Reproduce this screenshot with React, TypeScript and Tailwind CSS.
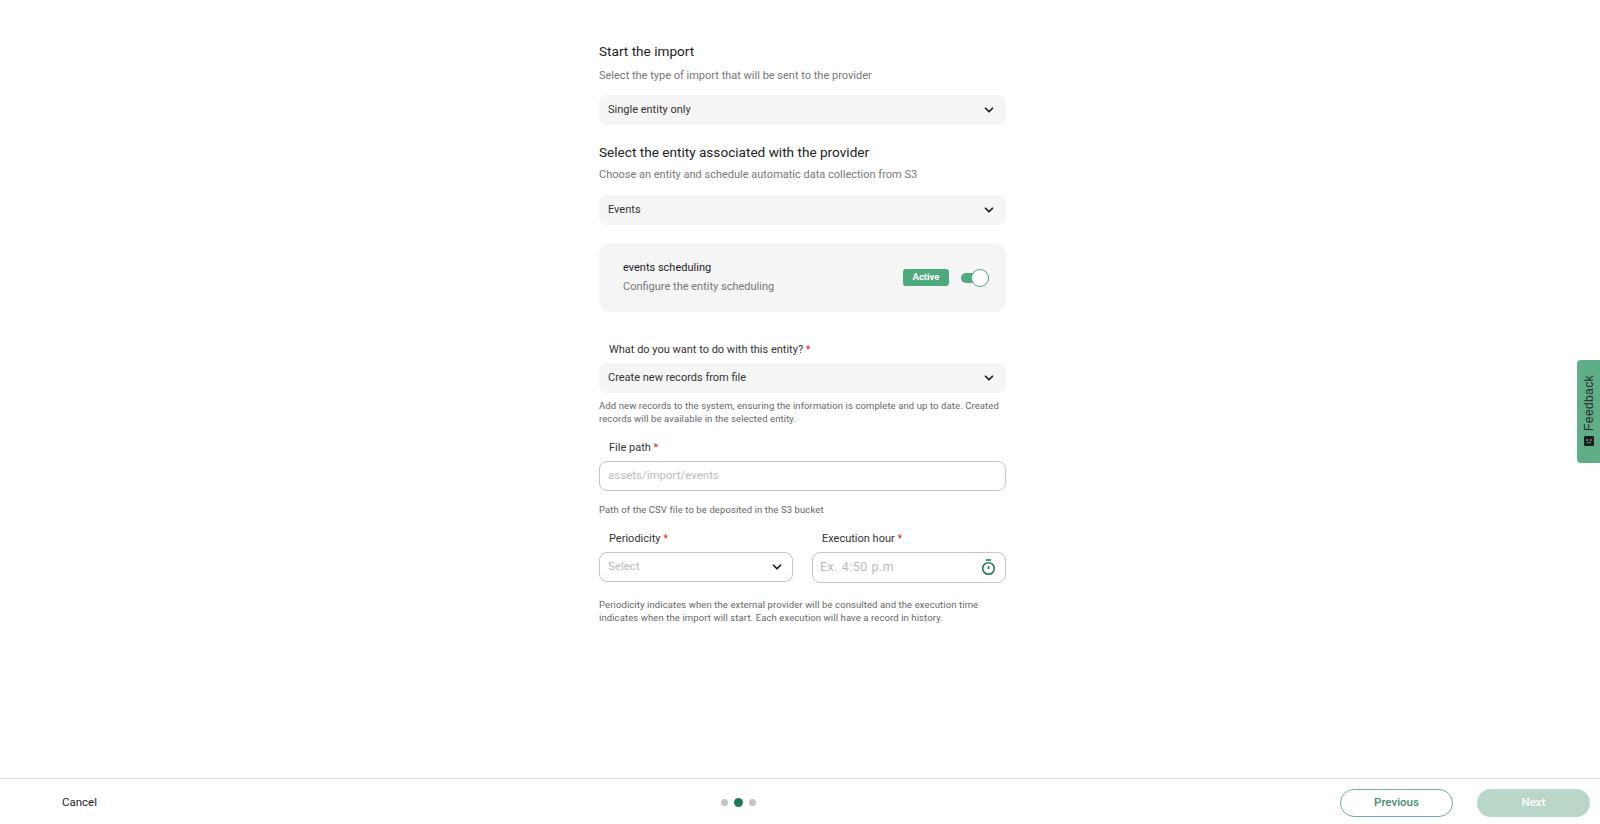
import React from 'react';
import { ChevronDown } from 'lucide-react';

const Chevron = () => <ChevronDown size={14} strokeWidth={3} className="text-[#1c1c1c]" />;

const Label = ({ text, className = '' }: { text: string; className?: string }) => (
  <div className={`h-[16px] px-[10px] text-[11px] leading-[16px] text-[#333] ${className}`}>
    {text} <span className="text-[#d92d20]">*</span>
  </div>
);

const GraySelect = ({ value }: { value: string }) => (
  <div className="flex h-[30px] items-center justify-between rounded-[8px] bg-[#f5f5f5] pl-[9px] pr-[10px] text-[11px] text-[#333]">
    <span>{value}</span>
    <Chevron />
  </div>
);

const Hint = ({ children, className = '' }: { children: React.ReactNode; className?: string }) => (
  <p className={`text-[9.5px] leading-[13px] tracking-[0.1px] text-[#666] ${className}`}>{children}</p>
);

export default function App() {
  return (
    <div className="relative flex h-[824px] flex-col overflow-hidden bg-white font-['Roboto',sans-serif]">
      <main className="flex-1">
        <div className="ml-[599px] w-[407px] pt-[43px]">
          <h2 className="text-[13.6px] font-[450] leading-[17px] text-[#222]">Start the import</h2>
          <p className="mt-[8px] text-[11px] leading-[15px] text-[#777]">Select the type of import that will be sent to the provider</p>
          <div className="mt-[12px]">
            <GraySelect value="Single entity only" />
          </div>

          <h2 className="mt-[19px] text-[13.6px] font-[450] leading-[17px] text-[#222]">Select the entity associated with the provider</h2>
          <p className="mt-[6px] text-[11px] leading-[15px] text-[#777]">Choose an entity and schedule automatic data collection from S3</p>
          <div className="mt-[13px]">
            <GraySelect value="Events" />
          </div>

          <div className="mt-[18px] flex h-[69px] items-center justify-between rounded-[12px] bg-[#f5f5f5] pl-[24px] pr-[17px]">
            <div>
              <div className="text-[11px] leading-[16px] text-[#1c1c1c]">events scheduling</div>
              <div className="mt-[3px] text-[11px] leading-[16px] text-[#777]">Configure the entity scheduling</div>
            </div>
            <div className="flex items-center gap-[12px]">
              <span className="flex h-[17px] w-[46px] items-center justify-center rounded-[3px] bg-[#4fa97e] text-[9.5px] font-bold text-white">Active</span>
              <span className="relative block h-[10px] w-[28px] rounded-full bg-[#4fa97e]">
                <span className="absolute right-0 top-[-4px] h-[18px] w-[18px] rounded-full border border-[#4fa97e] bg-white" />
              </span>
            </div>
          </div>

          <Label text="What do you want to do with this entity?" className="mt-[30px]" />
          <div className="mt-[5px]">
            <GraySelect value="Create new records from file" />
          </div>
          <Hint className="mt-[6px]">Add new records to the system, ensuring the information is complete and up to date. Created records will be available in the selected entity.</Hint>

          <Label text="File path" className="mt-[15px]" />
          <div className="mt-[5px] flex h-[30px] items-center rounded-[8px] border border-[#c4c4c4] px-[8px] text-[11.5px] text-[#bbb]">assets/import/events</div>
          <Hint className="mt-[12px]">Path of the CSV file to be deposited in the S3 bucket</Hint>

          <div className="mt-[15px] flex gap-[19px]">
            <div className="w-[194px]">
              <Label text="Periodicity" />
              <div className="mt-[5px] flex h-[30px] items-center justify-between rounded-[8px] border border-[#c4c4c4] px-[8px] text-[11.5px] text-[#bbb]">
                <span>Select</span>
                <Chevron />
              </div>
            </div>
            <div className="w-[194px]">
              <Label text="Execution hour" />
              <div className="mt-[5px] flex h-[31px] items-center justify-between rounded-[8px] border border-[#c4c4c4] pl-[7px] pr-[9px] text-[12.5px] tracking-[0.5px] text-[#bbb]">
                <span>Ex. 4:50 p.m</span>
                <svg width="15" height="17" viewBox="0 0 15 17" fill="none" stroke="#1f7a55" strokeWidth="1.6">
                  <path d="M5 1h5" />
                  <circle cx="7.5" cy="9.5" r="5.8" />
                  <path d="M7.5 7v3" />
                </svg>
              </div>
            </div>
          </div>

          <Hint className="mt-[15px]">Periodicity indicates when the external provider will be consulted and the execution time indicates when the import will start. Each execution will have a record in history.</Hint>
        </div>
      </main>

      <footer className="flex h-[46px] items-center border-t border-[#dedede] pl-[62px] pr-[10px] pt-[2px]">
        <span className="w-[659px] text-[11.5px] font-[450] text-[#1c1c1c]">Cancel</span>
        <div className="flex items-center gap-[6px]">
          <span className="h-[7px] w-[7px] rounded-full bg-[#c4c4c4]" />
          <span className="h-[9px] w-[9px] rounded-full bg-[#1f7a55]" />
          <span className="h-[7px] w-[7px] rounded-full bg-[#c4c4c4]" />
        </div>
        <div className="ml-auto flex gap-[24px]">
          <button className="h-[28px] w-[113px] rounded-full border border-[#6fae92] text-[11.5px] font-medium text-[#3f8f6b]">Previous</button>
          <button className="h-[28px] w-[113px] rounded-full bg-[#b9d6c8] text-[11.5px] font-medium text-white">Next</button>
        </div>
      </footer>

      <div className="absolute right-0 top-[360px] flex h-[103px] w-[23px] flex-col items-center gap-[5px] rounded-l-[4px] bg-[#5fae88] pt-[15px]">
        <span className="rotate-180 font-['Liberation_Sans',sans-serif] text-[12px] leading-[14px] tracking-[0.4px] text-[#2a2a2a] [writing-mode:vertical-rl]">Feedback</span>
        <svg width="10" height="10" viewBox="0 0 10 10">
          <rect width="10" height="10" rx="1" fill="#1c1c1c" />
          <circle cx="3.2" cy="4" r="0.9" fill="#5fae88" />
          <circle cx="6.8" cy="4" r="0.9" fill="#5fae88" />
          <path d="M3 6.6h4" stroke="#5fae88" strokeWidth="0.9" />
        </svg>
      </div>
    </div>
  );
}
